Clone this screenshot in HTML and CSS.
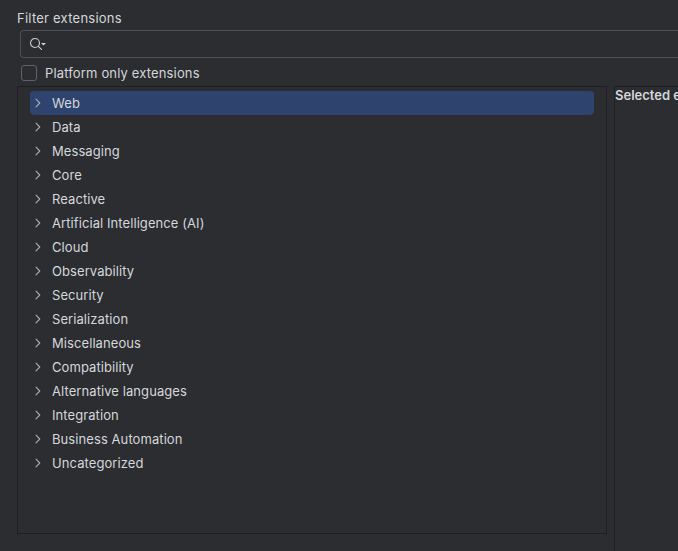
FILE: index.html
```html
<!DOCTYPE html>
<html lang="en">
<head>
<meta charset="utf-8">
<title>Extensions</title>
<link rel="stylesheet" href="styles.css">
</head>
<body>
<svg class="defs" width="0" height="0"><symbol id="chevron" viewBox="0 0 16 16"><path d="M6 4.2l3.8 3.8-3.8 3.8" fill="none" stroke="#a9acb2" stroke-width="1.1" stroke-linecap="round" stroke-linejoin="round"/></symbol></svg>
<main class="panel">
  <label class="title">Filter extensions</label>
  <div class="search">
    <svg width="20" height="16" viewBox="0 0 20 16"><circle cx="6" cy="7" r="4.5" fill="none" stroke="#ced0d6" stroke-width="1.1"/><path d="M9.3 10.3L12.5 13.3" stroke="#ced0d6" stroke-width="1.1" stroke-linecap="round"/><path d="M12 7h5l-2.5 2.5z" fill="#ced0d6"/></svg>
  </div>
  <label class="option"><span class="box"></span>Platform only extensions</label>
  <div class="columns">
    <ul class="tree">
      <li class="row selected"><svg class="chev"><use href="#chevron"/></svg>Web</li>
      <li class="row"><svg class="chev"><use href="#chevron"/></svg>Data</li>
      <li class="row"><svg class="chev"><use href="#chevron"/></svg>Messaging</li>
      <li class="row"><svg class="chev"><use href="#chevron"/></svg>Core</li>
      <li class="row"><svg class="chev"><use href="#chevron"/></svg>Reactive</li>
      <li class="row"><svg class="chev"><use href="#chevron"/></svg>Artificial Intelligence (AI)</li>
      <li class="row"><svg class="chev"><use href="#chevron"/></svg>Cloud</li>
      <li class="row"><svg class="chev"><use href="#chevron"/></svg>Observability</li>
      <li class="row"><svg class="chev"><use href="#chevron"/></svg>Security</li>
      <li class="row"><svg class="chev"><use href="#chevron"/></svg>Serialization</li>
      <li class="row"><svg class="chev"><use href="#chevron"/></svg>Miscellaneous</li>
      <li class="row"><svg class="chev"><use href="#chevron"/></svg>Compatibility</li>
      <li class="row"><svg class="chev"><use href="#chevron"/></svg>Alternative languages</li>
      <li class="row"><svg class="chev"><use href="#chevron"/></svg>Integration</li>
      <li class="row"><svg class="chev"><use href="#chevron"/></svg>Business Automation</li>
      <li class="row"><svg class="chev"><use href="#chevron"/></svg>Uncategorized</li>
    </ul>
    <section class="details">Selected e</section>
  </div>
</main>
</body>
</html>
```

FILE: styles.css
```css
* { box-sizing: border-box; }
body {
  margin: 0;
  height: 551px;
  overflow: hidden;
  background: #2b2d30;
  color: #d5d7db;
  font: 13px/16px Inter, sans-serif;
}
.defs { position: absolute; }
.panel {
  display: flex;
  flex-direction: column;
  height: 551px;
  padding: 10px 0 0 17px;
}
.title { height: 20px; letter-spacing: 0.24px; }
.search {
  display: flex;
  align-items: center;
  height: 28px;
  margin-left: 3px;
  padding-left: 8px;
  border: 1px solid #4e5157;
  border-right: 0;
  border-radius: 4px 0 0 4px;
}
.option {
  display: flex;
  align-items: center;
  gap: 8px;
  height: 28px;
  padding: 2px 0 0 4px;
  letter-spacing: 0.15px;
}
.box {
  width: 16px;
  height: 16px;
  border: 1px solid #5f6269;
  border-radius: 3px;
}
.columns {
  display: flex;
  flex: 1;
  gap: 7px;
}
.tree {
  width: 590px;
  height: 448px;
  margin: 0;
  padding: 4px 12px;
  border: 1px solid #1e1f22;
  list-style: none;
  letter-spacing: 0.08px;
}
.row {
  display: flex;
  align-items: center;
  gap: 6px;
  height: 24px;
  border-radius: 4px;
}
.selected { background: #2e436e; }
.chev { width: 16px; height: 16px; }
.details {
  flex: 1;
  border: 1px solid #1e1f22;
  border-width: 1px 0 0 1px;
  white-space: nowrap;
  font-weight: 600;
  overflow: hidden;
}
```
